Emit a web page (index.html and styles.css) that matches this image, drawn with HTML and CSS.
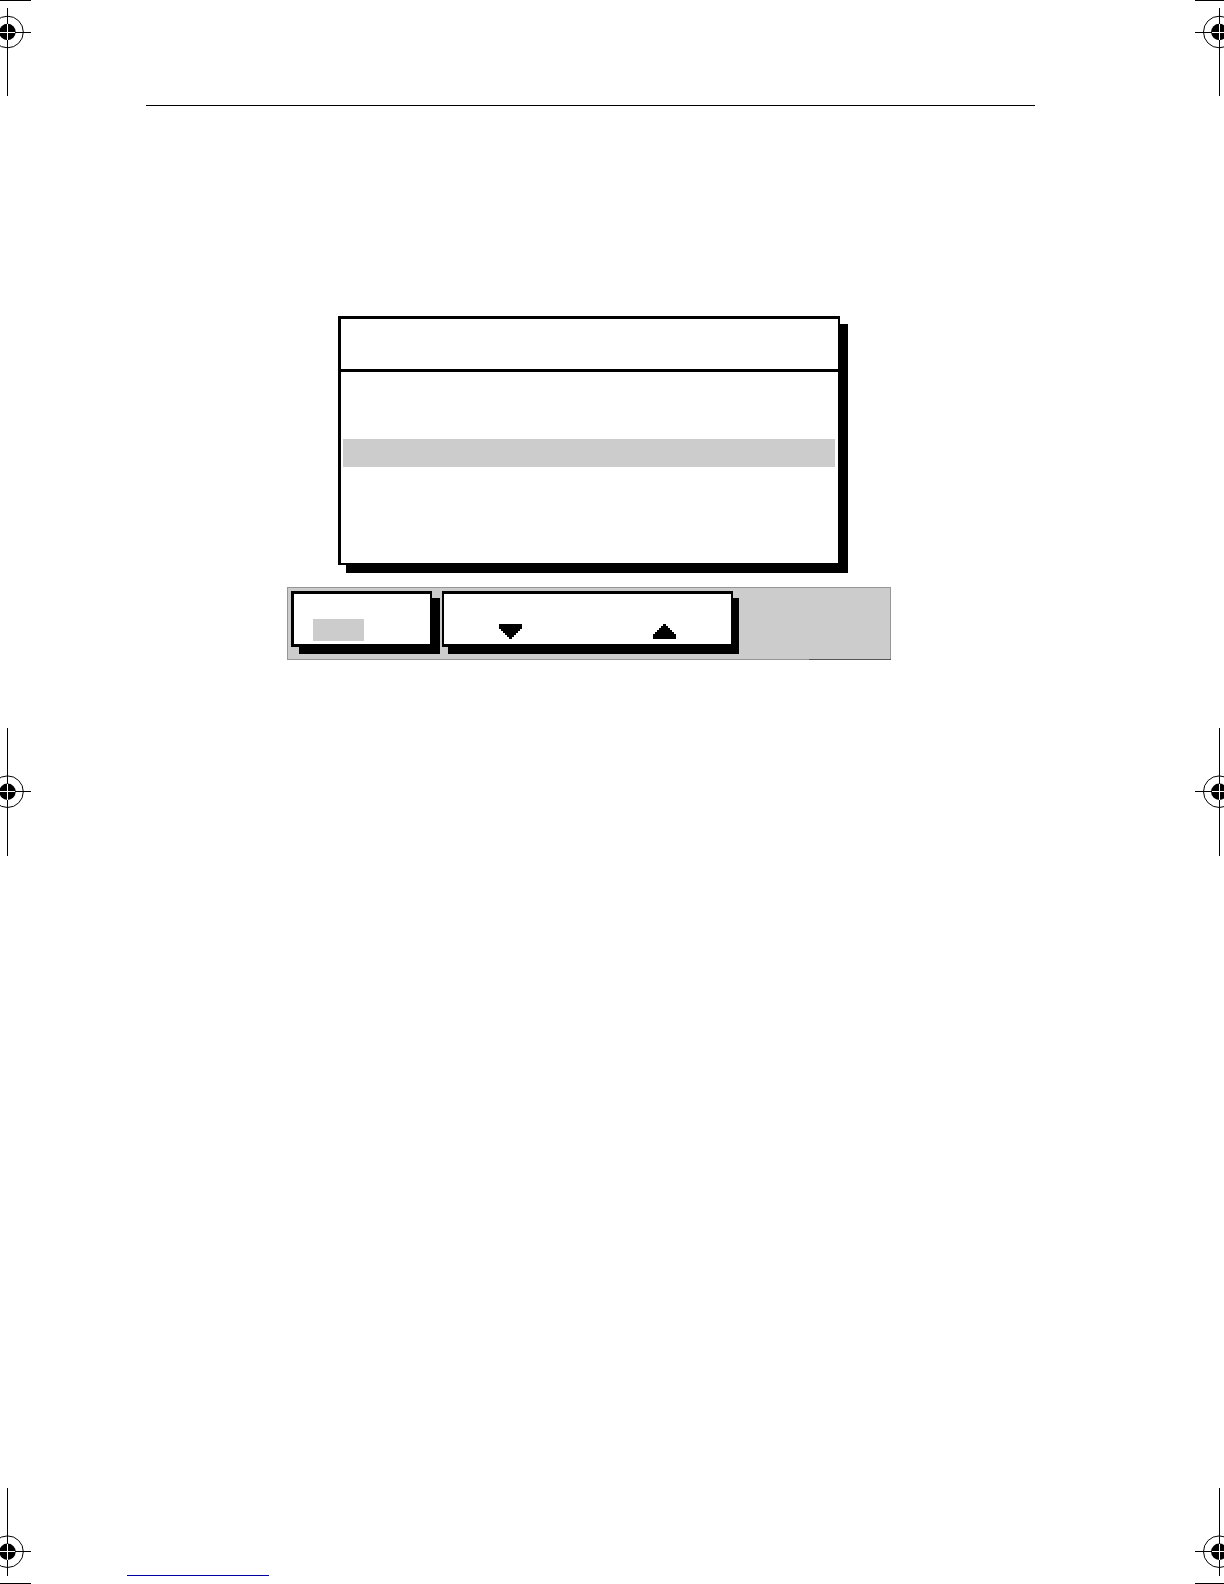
FILE: index.html
```html
<!DOCTYPE html>
<html lang="en">
<head>
  <meta charset="UTF-8" />
  <meta name="viewport" content="width=device-width, initial-scale=1" />
  <title>Menu page</title>
  <link rel="stylesheet" href="styles.css">
</head>
<body>
  <div class="sheet">
    <!-- left registration marks -->
    <div class="marks" aria-hidden="true">
      <svg width="31" height="96" shape-rendering="crispEdges">
        <path d="M0 0h31v1H0zM0 32h31v1H0zM7 8h1v88H7z" />
        <circle class="ring" cx="7.5" cy="32" r="15.8" />
        <circle cx="7.5" cy="32" r="8.2" />
        <path class="cross" d="M0 32h15v1H0zM7 24h1v16H7z" />
      </svg>
      <svg width="31" height="128" shape-rendering="crispEdges">
        <path d="M0 63h31v1H0zM7 0h1v128H7z" />
        <circle class="ring" cx="7.5" cy="63.7" r="15.8" />
        <circle cx="7.5" cy="63.7" r="8.2" />
        <path class="cross" d="M0 63h15v1H0zM7 56h1v16H7z" />
      </svg>
      <svg width="31" height="96" shape-rendering="crispEdges">
        <path d="M0 95h31v1H0zM0 63h31v1H0zM7 0h1v88H7z" />
        <circle class="ring" cx="7.5" cy="63.7" r="15.8" />
        <circle cx="7.5" cy="63.7" r="8.2" />
        <path class="cross" d="M0 63h15v1H0zM7 56h1v16H7z" />
      </svg>
    </div>

    <main class="content">
      <hr class="rule">

      <section class="screen">
        <div class="menu">
          <div class="menu-title"></div>
          <div class="menu-list">
            <div class="menu-row"></div>
            <div class="menu-row"></div>
            <div class="menu-row selected"></div>
            <div class="menu-row"></div>
            <div class="menu-row"></div>
            <div class="menu-row"></div>
          </div>
        </div>

        <div class="softkeys">
          <div class="key toggle-key">
            <span class="toggle-state"></span>
          </div>
          <div class="key arrow-key">
            <button class="arrow" type="button" aria-label="Down">
              <svg width="23" height="15" shape-rendering="crispEdges">
                <path d="M0 0h23v5h-2v2h-2v2h-2v2h-2v2h-2v2h-3v-2h-2v-2h-2v-2h-2v-2h-2v-2h-2z" />
              </svg>
            </button>
            <button class="arrow" type="button" aria-label="Up">
              <svg width="23" height="15" shape-rendering="crispEdges">
                <path d="M0 15h23v-5h-2v-2h-2v-2h-2v-2h-2v-2h-2v-2h-3v2h-2v2h-2v2h-2v2h-2v2h-2z" />
              </svg>
            </button>
          </div>
        </div>
      </section>

      <a class="page-link" href="#" aria-label="Back to top"></a>
    </main>

    <!-- right registration marks -->
    <div class="marks" aria-hidden="true">
      <svg width="29" height="96" shape-rendering="crispEdges">
        <path d="M0 0h29v1H0zM0 32h29v1H0zM24 8h1v88h-1z" />
        <circle class="ring" cx="24.3" cy="32" r="15.8" />
        <circle cx="24.3" cy="32" r="8.2" />
        <path class="cross" d="M17 32h12v1H17zM24 24h1v16h-1z" />
      </svg>
      <svg width="29" height="128" shape-rendering="crispEdges">
        <path d="M0 63h29v1H0zM24 0h1v128h-1z" />
        <circle class="ring" cx="24.3" cy="63.7" r="15.8" />
        <circle cx="24.3" cy="63.7" r="8.2" />
        <path class="cross" d="M17 63h12v1H17zM24 56h1v16h-1z" />
      </svg>
      <svg width="29" height="96" shape-rendering="crispEdges">
        <path d="M0 95h29v1H0zM0 63h29v1H0zM24 0h1v88h-1z" />
        <circle class="ring" cx="24.3" cy="63.7" r="15.8" />
        <circle cx="24.3" cy="63.7" r="8.2" />
        <path class="cross" d="M17 63h12v1H17zM24 56h1v16h-1z" />
      </svg>
    </div>
  </div>
</body>
</html>
```
FILE: styles.css
```css
:root {
  --ink: #000;
  --paper: #fff;
  --shade: #ccc;
  --edge: #969696;
  --link: #00009c;
}

* {
  box-sizing: border-box;
}

body {
  margin: 0;
  background-color: var(--paper);
  color: var(--ink);
  font-family: "Liberation Sans", Arial, sans-serif;
}

.sheet {
  display: grid;
  grid-template-columns: auto 1fr auto;
  min-height: 100vh;
}

.marks {
  display: flex;
  flex-direction: column;
  justify-content: space-between;
}

.marks svg {
  display: block;
}

.marks circle {
  shape-rendering: auto;
}

.marks .ring {
  fill: none;
  stroke: var(--ink);
}

.marks .cross {
  fill: var(--paper);
}

.content {
  display: flex;
  flex-direction: column;
  padding: 105px 160px 8px 96px;
}

.rule {
  align-self: stretch;
  height: 1px;
  margin: 0 0 0 19px;
  border: none;
  background-color: var(--ink);
}

.screen {
  margin: 210px 144px 0 160px;
}

/* menu window */
.menu {
  margin: 0 51px;
  border: solid var(--ink);
  border-width: 3px 2px 2px 3px;
  background-color: var(--paper);
  box-shadow: 8px 8px 0 var(--ink);
}

.menu-title {
  min-height: 53px;
  border-bottom: 3px solid var(--ink);
}

.menu-list {
  padding: 11px 3px 12px 2px;
}

.menu-row {
  min-height: 28px;
}

.menu-row.selected {
  background-color: var(--shade);
}

/* softkey bar */
.softkeys {
  position: relative;
  display: grid;
  grid-template-columns: 141fr 291fr 147fr;
  gap: 10px;
  margin-top: 22px;
  padding: 3px 0 12px 3px;
  border: 1px solid var(--edge);
  background-color: var(--shade);
}

.softkeys::after {
  content: "";
  position: absolute;
  right: -1px;
  bottom: -1px;
  width: 82px;
  height: 1px;
  background-color: #555;
}

.key {
  display: flex;
  align-items: flex-end;
  min-height: 56px;
  border: solid var(--ink);
  border-width: 3px 2px;
  background-color: var(--paper);
  box-shadow: 6px 7px 0 var(--ink);
}

.toggle-key {
  padding: 0 19px 3px;
  border-left-width: 3px;
  box-shadow: 8px 7px 0 var(--ink);
}

.toggle-state {
  width: 51px;
  height: 22px;
  background-color: var(--shade);
}

.arrow-key {
  justify-content: space-between;
  padding: 0 55px 5px;
}

.arrow {
  padding: 0;
  border: none;
  background: none;
  cursor: pointer;
}

.arrow svg {
  display: block;
}

.page-link {
  width: 142px;
  margin-top: auto;
  border-bottom: 1px solid var(--link);
}
```
